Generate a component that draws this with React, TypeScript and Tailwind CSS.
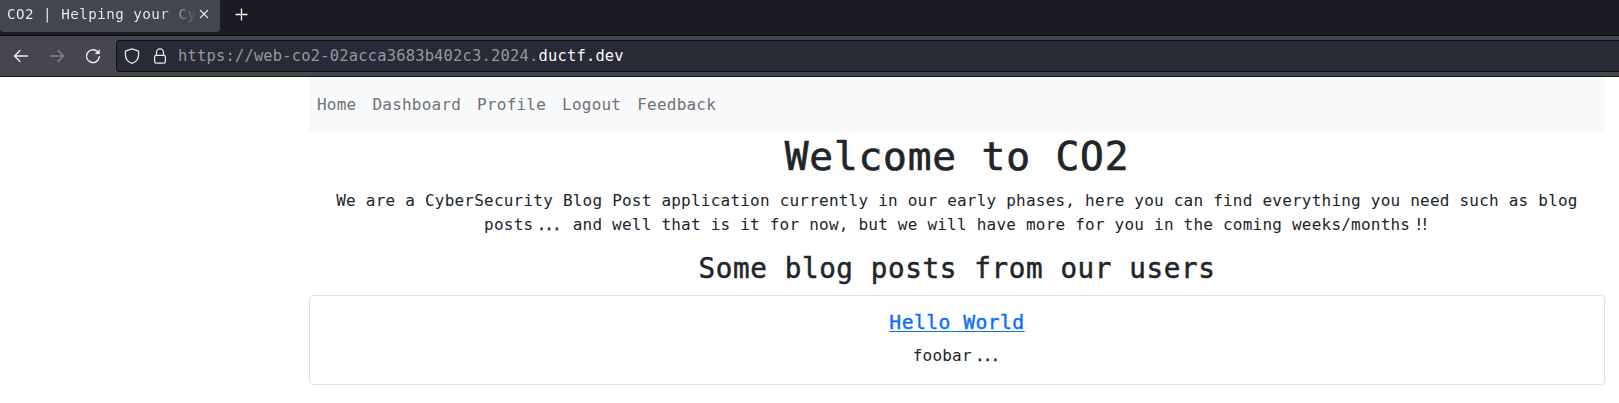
import React from "react";

function Dots({ children, className }: { children: React.ReactNode; className: string }) {
  return <span className={"inline-block text-center align-baseline " + className}>{children}</span>;
}

function TabStrip() {
  return (
    <div className="flex h-[35px] w-full bg-[#1b1c20]">
      <div className="flex h-8 w-[220px] shrink-0 items-start rounded-b-[4px] bg-[#43464c] pl-[7px]">
        <div className="h-7 w-[188px] overflow-hidden whitespace-nowrap bg-linear-to-r from-[#f0f0f1] from-[82%] to-[#55585e] bg-clip-text text-[14.2px] leading-7 tracking-[0.48px] text-transparent">
          CO2 | Helping your Cy
        </div>
        <svg className="mt-[9px] ml-[4px]" width="10" height="10" viewBox="0 0 10 10" stroke="#e4e4e6" strokeWidth="1.1">
          <path d="M1 1l8 8M9 1l-8 8" />
        </svg>
      </div>
      <svg className="mt-2 ml-[15px]" width="13" height="13" viewBox="0 0 13 13" stroke="#f2f2f3" strokeWidth="1.3">
        <path d="M6.5 .5v12M.5 6.5h12" />
      </svg>
    </div>
  );
}

function Toolbar() {
  return (
    <div className="flex h-[42px] w-full border-t border-b border-[#0e0f13] bg-[#45474d] pt-1">
      <div className="flex h-8 w-[116px] shrink-0 items-center pl-[13px]">
        <svg width="16" height="16" viewBox="0 0 16 16" fill="none" stroke="#f4f4f5" strokeWidth="1.3" strokeLinecap="round" strokeLinejoin="round">
          <path d="M14.3 8H1.5M7 2.5L1.5 8L7 13.5" />
        </svg>
        <svg className="ml-5" width="16" height="16" viewBox="0 0 16 16" fill="none" stroke="#84868a" strokeWidth="1.3" strokeLinecap="round" strokeLinejoin="round">
          <path d="M1.7 8h12.8M9 2.5L14.5 8L9 13.5" />
        </svg>
        <svg className="ml-5" width="16" height="16" viewBox="0 0 16 16" fill="none" stroke="#f4f4f5" strokeWidth="1.4" strokeLinecap="round">
          <path d="M14.3 8.8A6.4 6.4 0 1 1 12.4 3.6L13.6 4.8" />
          <path d="M14.7 1.2v4.9H9.8z" fill="#f4f4f5" stroke="none" />
        </svg>
      </div>
      <div className="flex h-8 flex-1 items-center rounded-l-[4px] border border-r-0 border-[#0c0d11] bg-[#282a36] pl-[7px]">
        <svg width="16" height="16" viewBox="0 0 16 16" fill="none" stroke="#e9e9ec" strokeWidth="1.3" strokeLinejoin="round">
          <path d="M8 .8L14.6 3.2V6.5C14.6 10.8 12 14 8 15.3C4 14 1.4 10.8 1.4 6.5V3.2z" />
        </svg>
        <svg className="ml-3" width="16" height="16" viewBox="0 0 16 16" fill="none" stroke="#e9e9ec" strokeWidth="1.3">
          <rect x="2.6" y="7.4" width="10.8" height="7.8" rx="1.6" />
          <path d="M4.5 7.4V4.4a3.5 3.5 0 0 1 7 0v3" />
        </svg>
        <div className="ml-[10px] whitespace-nowrap text-[15.4px] leading-6 tracking-[0.22px] text-[#97989e]">
          https://web-co2-02acca3683b402c3.2024.<span className="text-[#fafafa]">ductf.dev</span>
        </div>
      </div>
    </div>
  );
}

const links = ["Home", "Dashboard", "Profile", "Logout", "Feedback"];

export default function App() {
  return (
    <div className="h-[403px] w-full overflow-hidden bg-white font-['DejaVu_Sans_Mono',monospace] text-[#212529]">
      <TabStrip />
      <Toolbar />
      <main className="ml-[309px] w-[1296px] text-center text-[16px] leading-6 tracking-[0.22px]">
        <nav className="flex h-14 items-center gap-4 bg-[#f8f9fb] px-2 text-[#717273]">
          {links.map((l) => (
            <a key={l}>{l}</a>
          ))}
        </nav>
        <h1 className="-mt-px text-[39.5px] leading-[48px] tracking-[0.84px] [-webkit-text-stroke:0.7px_#212529]">Welcome to CO2</h1>
        <p className="mt-[9px] whitespace-nowrap">
          We are a CyberSecurity Blog Post application currently in our early phases, here you can find everything you need such as blog
          <br />
          posts<Dots className="w-[29.5px] tracking-[-2px] [-webkit-text-stroke:0.3px_#212529]">...</Dots> and well that is it for now, but we will have more for you in the coming weeks/months
          <Dots className="w-[19.7px] tracking-[-3.5px]">!!</Dots>
        </p>
        <h3 className="mt-[15px] text-[27.6px] leading-[33.6px] tracking-[0.62px] [-webkit-text-stroke:0.5px_#212529]">Some blog posts from our users</h3>
        <section className="mt-[9px] rounded-[4px] border border-[#dfdfdf] p-4">
          <h5 className="-mt-px text-[19.7px] leading-6 tracking-[0.45px]">
            <a className="text-[#0d6efd] underline decoration-1 underline-offset-2 [-webkit-text-stroke:0.4px_#0d6efd]">Hello World</a>
          </h5>
          <p className="mt-[9px]">
            foobar<Dots className="w-[29.5px] tracking-[-2px] [-webkit-text-stroke:0.3px_#212529]">...</Dots>
          </p>
        </section>
      </main>
    </div>
  );
}
